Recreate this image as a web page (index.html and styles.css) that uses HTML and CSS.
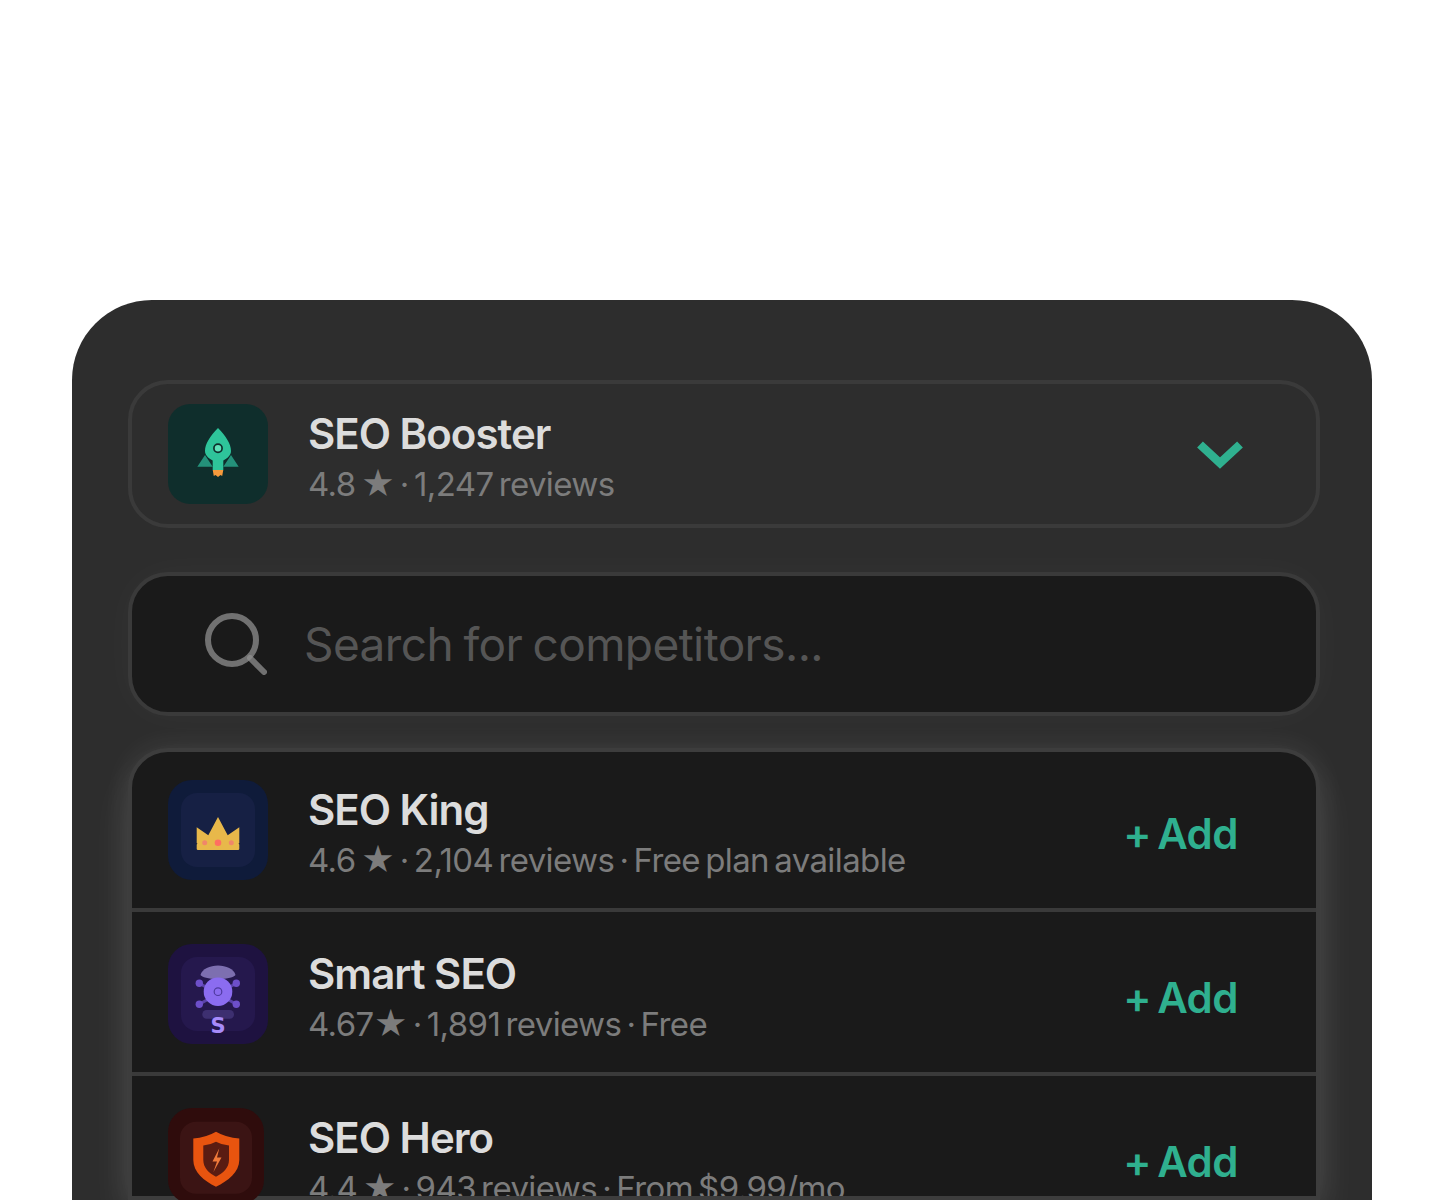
FILE: index.html
```html
<!DOCTYPE html>
<html>
  <head>
    <title>Competitors</title>
    <link rel="stylesheet" href="styles.css">
  </head>
  <body>
    <div class="panel">
      <div class="app-card">
        <svg class="app-icon" viewBox="0 0 100 100">
          <rect width="100" height="100" rx="22" fill="#0f2e2c"/>
          <path d="M37 51 L44.700 62.700 L29.300 62.700 Z M63 51 L55.300 62.700 L70.700 62.700 Z" fill="#24917a"/>
          <path d="M50 24 C58 32 63 40 63 47 C63 51 60 54 55.300 56.500 L55.300 66 L44.700 66 L44.700 56.500 C40 54 37 51 37 47 C37 40 42 32 50 24 Z" fill="#2ec49a"/>
          <path d="M44.700 66 H55.300 L54.200 72 L52.500 71 L50 73 L47.500 71 L45.800 72 Z" fill="#f59a3c"/>
          <circle cx="50" cy="44.300" r="4.100" fill="#5fe0b8" stroke="#0f2e2c" stroke-width="1.700"/>
        </svg>
        <div class="app-text">
          <div class="app-name">SEO Booster</div>
          <div class="app-meta">4.8 ★ · 1,247 reviews</div>
        </div>
        <svg class="chevron" viewBox="0 0 46 30">
          <polyline points="3,4.500 23,23 43,4.500" fill="none" stroke="#2fb08f" stroke-width="8.500"/>
        </svg>
      </div>

      <div class="search">
        <svg class="search-icon" viewBox="0 0 64 64">
          <circle cx="29" cy="29" r="24" fill="none" stroke="#8f8f8f" stroke-width="6" opacity="0.75"/>
          <line x1="47" y1="47" x2="61" y2="61" stroke="#8f8f8f" stroke-width="6" stroke-linecap="round" opacity="0.75"/>
        </svg>
        <span class="search-text">Search for competitors...</span>
      </div>

      <div class="list">
        <div class="row row-first">
          <svg class="app-icon" viewBox="0 0 100 100">
            <rect width="100" height="100" rx="24" fill="#0f1b3a"/>
            <rect x="13" y="13" width="74" height="74" rx="16" fill="#162044"/>
            <path d="M28.700 47.300 L40.300 55.300 L50 37 L59.700 55.300 L71.300 47.300 L71.300 63 L70.500 63.700 L71.300 64.400 L71.300 69 Q71.300 70 70 70 L30 70 Q28.700 70 28.700 69 L28.700 64.400 L29.500 63.700 L28.700 63 Z" fill="#e8b84a"/>
            <circle cx="36.700" cy="62.700" r="2.500" fill="#f0866a"/>
            <circle cx="50" cy="62.700" r="3.300" fill="#ff6f61"/>
            <circle cx="63.300" cy="62.700" r="2.500" fill="#f0866a"/>
          </svg>
          <div class="app-text">
            <div class="app-name">SEO King</div>
            <div class="app-meta">4.6 ★ · 2,104 reviews · Free plan available</div>
          </div>
          <span class="add">+ Add</span>
        </div>

        <div class="row">
          <svg class="app-icon" viewBox="0 0 100 100">
            <rect width="100" height="100" rx="24" fill="#1e1240"/>
            <rect x="13" y="13" width="74" height="74" rx="16" fill="#25184d"/>
            <path d="M32.500 31 C34 25 42 21.500 50 21.500 C58 21.500 66 25 67.500 31 C66 33 60 35 50 35 C40 35 34 33 32.500 31 Z" fill="#7d6fb0"/>
            <path d="M31.300 39.300 L68.300 60.300 M68.300 39.300 L31.300 60.300" stroke="#5a43a8" stroke-width="3"/>
            <circle cx="31.300" cy="39.300" r="3.700" fill="#6d4fc9"/>
            <circle cx="68.300" cy="39.300" r="3.700" fill="#6d4fc9"/>
            <circle cx="31.300" cy="60.300" r="3.700" fill="#6d4fc9"/>
            <circle cx="68.300" cy="60.300" r="3.700" fill="#6d4fc9"/>
            <circle cx="50" cy="47.700" r="14.300" fill="#8b6cf0"/>
            <circle cx="50" cy="47.700" r="3.800" fill="none" stroke="#4f3aa0" stroke-width="1.200"/>
            <rect x="34.300" y="66" width="31.700" height="8.700" rx="4.300" fill="#3d2f70"/>
            <text class="badge-letter" x="50" y="89" text-anchor="middle">S</text>
          </svg>
          <div class="app-text">
            <div class="app-name">Smart SEO</div>
            <div class="app-meta">4.67★ · 1,891 reviews · Free</div>
          </div>
          <span class="add">+ Add</span>
        </div>

        <div class="row row-cut">
          <svg class="app-icon app-icon-small" viewBox="0 0 96 96">
            <rect width="96" height="96" rx="24" fill="#2f0c0c"/>
            <rect x="12" y="13.700" width="72" height="72" rx="16" fill="#3b1414"/>
            <path d="M48 23.700 Q58 29.500 71.300 30.500 L71.300 52 C71.300 64 60 73 48 78.700 C36 73 25.300 64 25.300 52 L25.300 30.500 Q38 29.500 48 23.700 Z" fill="#e8540f"/>
            <path d="M48 33.700 Q54 37 61 37.500 L61 52 C61 60 55 65 48 68.700 C41 65 35.300 60 35.300 52 L35.300 37.500 Q42 37 48 33.700 Z" fill="#5a1c12"/>
            <path d="M51.300 40.300 L44.500 53.500 L49 53.500 L45.300 64.300 L53.500 49.500 L49 49.500 Z" fill="#f07a3a"/>
          </svg>
          <div class="app-text">
            <div class="app-name">SEO Hero</div>
            <div class="app-meta">4.4 ★ · 943 reviews · From $9.99/mo</div>
          </div>
          <span class="add">+ Add</span>
        </div>
      </div>
    </div>
  </body>
</html>
```

FILE: styles.css
```css
html, body {
  margin: 0;
  height: 1200px;
  overflow: hidden;
  background-color: #fff;
}

body {
  padding: 300px 68px 0 72px;
  box-sizing: border-box;
  font-family: Inter, "Liberation Sans", sans-serif;
}

.panel {
  height: 900px;
  box-sizing: border-box;
  padding: 80px 52px 0 56px;
  background-color: #2d2d2d;
  border-radius: 80px 80px 0 0;
  overflow: hidden;
}

.app-card {
  display: flex;
  align-items: flex-start;
  height: 148px;
  box-sizing: border-box;
  padding: 20px 0 0 36px;
  border: 4px solid #3a3a3a;
  border-radius: 40px;
  box-shadow: 0 0 60px rgba(255, 255, 255, 0.015);
}

.app-icon {
  width: 100px;
  height: 100px;
  flex-shrink: 0;
}

.app-icon-small {
  width: 96px;
  height: 96px;
}

.app-text {
  flex: 1;
  box-sizing: border-box;
  margin-left: 40px;
  padding-top: 5px;
  overflow: hidden;
}

.app-name {
  font-size: 42px;
  line-height: 50px;
  font-weight: 600;
  letter-spacing: -1px;
  color: #dcdcdc;
}

.app-meta {
  font-size: 33px;
  line-height: 51px;
  letter-spacing: -0.6px;
  word-spacing: -3.5px;
  color: #7c7c7c;
}

.chevron {
  width: 46px;
  height: 30px;
  margin: 36px 73px 0 0;
}

.search {
  display: flex;
  align-items: center;
  height: 144px;
  box-sizing: border-box;
  margin-top: 44px;
  padding-left: 71px;
  background-color: #1a1a1a;
  border: 4px solid #3a3a3a;
  border-radius: 40px;
  box-shadow: 0 0 40px rgba(255, 255, 255, 0.03);
}

.search-icon {
  width: 64px;
  height: 64px;
  margin-top: -2px;
}

.search-text {
  margin-left: 37px;
  font-size: 46px;
  letter-spacing: -0.6px;
  word-spacing: -2px;
  color: #555;
}

.list {
  height: 452px;
  box-sizing: border-box;
  margin-top: 32px;
  background-color: #1a1a1a;
  border: 4px solid #3d3d3d;
  border-radius: 40px 40px 0 0;
  box-shadow: 0 0 30px rgba(255, 255, 255, 0.09), 0 24px 44px rgba(255, 255, 255, 0.09);
}

.row {
  display: flex;
  align-items: flex-start;
  height: 164px;
  box-sizing: border-box;
  padding: 32px 78px 0 36px;
  border-bottom: 4px solid #3a3a3a;
}

.row-first {
  height: 160px;
  padding-top: 28px;
}

.row-cut {
  height: 120px;
  border-bottom: 0;
}

.row-cut .app-text {
  height: 88px;
  margin-left: 44px;
}

.add {
  font-size: 42px;
  line-height: 50px;
  font-weight: 600;
  letter-spacing: -0.5px;
  word-spacing: -4px;
  margin-top: 29px;
  color: #2fb08f;
}

.badge-letter {
  font-family: "DejaVu Sans", sans-serif;
  font-size: 21px;
  font-weight: 700;
  fill: #a78bfa;
}
```
